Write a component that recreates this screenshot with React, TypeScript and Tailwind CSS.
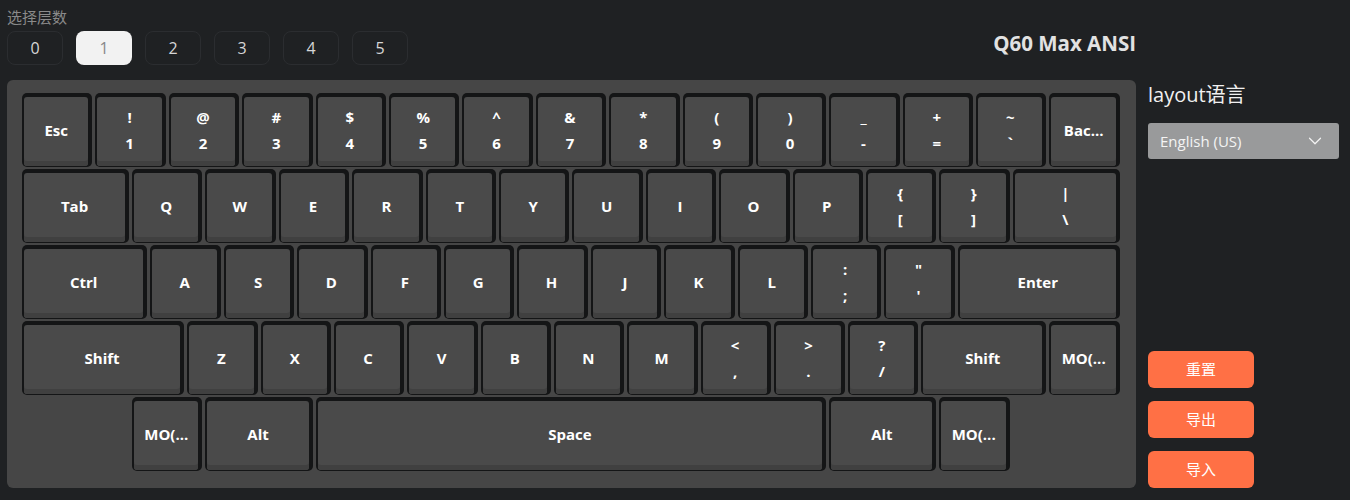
import { ChevronDown } from "lucide-react";

type KeyDef = { top?: string; label: string; u?: number };
type Row = { offset?: number; keys: KeyDef[] };

const U = 73.4;

const k = (label: string, u = 1): KeyDef => ({ label, u });
const s = (top: string, label: string): KeyDef => ({ top, label, u: 1 });

const rows: Row[] = [
  {
    keys: [
      k("Esc"),
      s("!", "1"),
      s("@", "2"),
      s("#", "3"),
      s("$", "4"),
      s("%", "5"),
      s("^", "6"),
      s("&", "7"),
      s("*", "8"),
      s("(", "9"),
      s(")", "0"),
      s("_", "-"),
      s("+", "="),
      s("~", "`"),
      k("Bac..."),
    ],
  },
  {
    keys: [
      k("Tab", 1.5),
      ..."QWERTYUIOP".split("").map((c) => k(c)),
      s("{", "["),
      s("}", "]"),
      { top: "|", label: "\\", u: 1.5 },
    ],
  },
  {
    keys: [
      k("Ctrl", 1.75),
      ..."ASDFGHJKL".split("").map((c) => k(c)),
      s(":", ";"),
      s('"', "'"),
      k("Enter", 2.25),
    ],
  },
  {
    keys: [
      k("Shift", 2.25),
      ..."ZXCVBNM".split("").map((c) => k(c)),
      s("<", ","),
      s(">", "."),
      s("?", "/"),
      k("Shift", 1.75),
      k("MO(..."),
    ],
  },
  {
    offset: 1.5,
    keys: [k("MO(..."), k("Alt", 1.5), k("Space", 7), k("Alt", 1.5), k("MO(...")],
  },
];

const layers = ["0", "1", "2", "3", "4", "5"];

function Key({ def }: { def: KeyDef }) {
  const width = (def.u ?? 1) * U - 3;
  return (
    <div
      className="h-[74px] shrink-0 rounded-[5px] bg-[#141516] pt-[4px] pr-[4px] pl-[2px] pb-[1px]"
      style={{ width }}
    >
      <div className="flex h-full w-full flex-col items-center justify-center rounded-[3px] bg-[#4a4a4a] pb-[3px] shadow-[inset_0_-5px_0_#404040] text-[15px] font-bold text-white">
        {def.top ? (
          <>
            <span className="leading-[20px]">{def.top}</span>
            <span className="mt-[6px] leading-[20px]">{def.label}</span>
          </>
        ) : (
          <span className="leading-[20px]">{def.label}</span>
        )}
      </div>
    </div>
  );
}

export default function App() {
  return (
    <div
      className="min-h-[500px] w-[1350px] bg-[#1f2123] px-[7px] pt-[6px]"
      style={{ fontFamily: '"Open Sans", "Noto Sans CJK SC", sans-serif' }}
    >
      {/* Header */}
      <div className="flex w-[1129px] items-end justify-between">
        <div>
          <div className="text-[15px] leading-[22px] text-[#8a8a8a]">选择层数</div>
          <div className="mt-[3px] flex gap-[13px]">
            {layers.map((l) => (
              <button
                key={l}
                className={
                  l === "1"
                    ? "h-[34px] w-[56px] rounded-[8px] bg-[#f2f2f2] text-[16px] text-[#888]"
                    : "h-[34px] w-[56px] rounded-[8px] border border-[#2b2d30] text-[16px] text-[#d6d6d6]"
                }
              >
                {l}
              </button>
            ))}
          </div>
        </div>
        <div className="mb-[8px] text-[20.5px] leading-[28px] font-bold text-[#e2e2e2]">Q60 Max ANSI</div>
      </div>

      <div className="mt-[15px] flex gap-[12px]">
        {/* Keyboard */}
        <div className="flex h-[408px] w-[1129px] flex-col gap-[2px] rounded-[6px] bg-[#464646] pl-[15px] pt-[13px]">
          {rows.map((row, i) => (
            <div key={i} className="flex gap-[3px]">
              {row.offset ? <div className="shrink-0" style={{ width: row.offset * U - 3 }} /> : null}
              {row.keys.map((def, j) => (
                <Key key={j} def={def} />
              ))}
            </div>
          ))}
        </div>

        {/* Sidebar */}
        <div className="flex w-[191px] flex-col">
          <div className="text-[20px] leading-[30px] text-[#f0f0f0]">layout语言</div>
          <div className="mt-[13px] flex h-[36px] items-center justify-between rounded-[3px] bg-[#999a9b] pl-[12px] pr-[13px] text-[15px] text-[#f4f4f4]">
            <span>English (US)</span>
            <ChevronDown className="h-[22px] w-[22px]" strokeWidth={1.3} />
          </div>
          <div className="mt-auto flex flex-col gap-[13px]">
            {["重置", "导出", "导入"].map((t) => (
              <button
                key={t}
                className="h-[37px] w-[106px] rounded-[6px] bg-[#ff7045] text-[15px] text-white"
              >
                {t}
              </button>
            ))}
          </div>
        </div>
      </div>
    </div>
  );
}
